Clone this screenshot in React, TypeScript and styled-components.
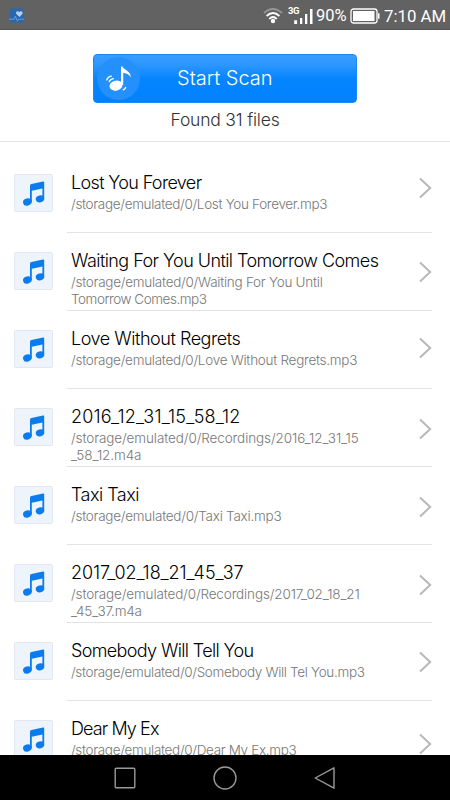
import React from "react";
import styled, { createGlobalStyle } from "styled-components";

const GlobalStyle = createGlobalStyle`
  * { box-sizing: border-box; }
  html, body { margin: 0; padding: 0; background: #fff; overflow: hidden; }
  svg { display: block; flex: none; }
`;

const Screen = styled.div`
  width: 450px;
  height: 800px;
  display: flex;
  flex-direction: column;
  overflow: hidden;
  background: #fff;
  font-family: Inter, "Liberation Sans", sans-serif;
  font-weight: 300;
`;

const StatusBar = styled.header`
  flex: none;
  height: 30px;
  padding: 1px 4px 0 9px;
  display: flex;
  align-items: center;
  background: #626262;
  border-bottom: 1px solid #555;
  color: #fff;
  font-family: Roboto, sans-serif;
  font-weight: 400;
  white-space: nowrap;
`;

const StatusIcons = styled.div`
  margin-left: auto;
  display: flex;
  align-items: center;
  padding-top: 2px;
`;

const StatusText = styled.span<{ $width: number; $size: number; $gap: number }>`
  width: ${(p) => p.$width}px;
  margin-left: ${(p) => p.$gap}px;
  font-size: ${(p) => p.$size}px;
  line-height: 22px;
`;

const SignalGroup = styled.div`
  display: flex;
  align-items: center;
  gap: 5px;
`;

const ScanPanel = styled.section`
  flex: none;
  height: 112px;
  padding-top: 24px;
  display: flex;
  flex-direction: column;
  align-items: center;
  border-bottom: 1px solid #e6e6e6;
`;

const ScanButton = styled.button`
  width: 264px;
  height: 49px;
  margin: 0;
  padding: 0 0 0 3px;
  display: flex;
  align-items: center;
  border: 1px solid #1d88f5;
  border-radius: 4px;
  background: linear-gradient(#3a9dff 0, #2d97ff 20%, #0584ff 52%, #0082ff 100%);
  color: #fff;
  font: inherit;
`;

const ScanLabel = styled.span`
  margin-left: 37px;
  padding-bottom: 1px;
  font-size: 20px;
  white-space: nowrap;
`;

const FoundLabel = styled.p`
  margin: 5px 0 0;
  font-size: 17.5px;
  line-height: 24px;
  letter-spacing: -0.2px;
  color: #333;
`;

const FileList = styled.ul`
  flex: 1;
  min-height: 0;
  margin: 0;
  padding: 13px 18px 0 14px;
  overflow: hidden;
  list-style: none;
`;

const FileRow = styled.li`
  height: 78px;
  display: flex;
`;

const Thumb = styled.div`
  flex: none;
  width: 39px;
  height: 38px;
  margin-top: 19px;
  display: flex;
  align-items: center;
  justify-content: center;
  background: #edf4fc;
  border: 1px solid #e3e8ee;
  border-radius: 2px;
`;

const RowBody = styled.div`
  flex: 1;
  margin-left: 14px;
  padding: 16px 0 0 4px;
  display: flex;
  border-bottom: 1px solid #e2e2e2;
`;

const FileText = styled.div`
  flex: 1;
  white-space: nowrap;
`;

const FileName = styled.div<{ $spacing: number }>`
  font-size: 18px;
  line-height: 23px;
  letter-spacing: ${(p) => p.$spacing}px;
  color: #000;
`;

const FilePath = styled.div`
  margin-top: 2px;
  font-size: 13.5px;
  line-height: 17px;
  color: #777;
`;

const PathLine = styled.div<{ $spacing: number }>`
  letter-spacing: ${(p) => p.$spacing}px;
`;

const ChevronSlot = styled.div<{ $top: number }>`
  flex: none;
  width: 14px;
  padding-top: ${(p) => p.$top}px;
`;

const NavBar = styled.nav`
  flex: none;
  height: 45px;
  display: flex;
  align-items: center;
  justify-content: center;
  gap: 76px;
  background: #000;
`;

const HealthIcon = () => (
  <svg width="17" height="17" viewBox="0 0 17 17">
    <rect x="1" y="1.5" width="14" height="14" rx="3" fill="#2868ae" />
    <path d="M10.5 10 7.4 7C5.9 5.2 8.3 3 10.3 5c1.8-2 4.5.1 3 2z" fill="#b9cfe8" />
    <path d="M0 12.2h5l1.4-3 2 5 1.3-2H15" fill="none" stroke="#6fa3d8" strokeWidth="0.9" />
  </svg>
);

const WifiIcon = () => (
  <svg width="20" height="16" viewBox="0 0 20 16" fill="none">
    <path d="M1 5Q10-3 19 5" stroke="#969696" strokeWidth="1.7" />
    <path d="M3.6 8Q10 2 16.4 8" stroke="#fff" strokeWidth="1.8" />
    <path d="M6.2 11Q10 7 13.8 11" stroke="#fff" strokeWidth="1.8" />
    <circle cx="10" cy="13" r="2.2" fill="#fff" />
  </svg>
);

const SignalIcon = () => (
  <svg width="26" height="20" viewBox="0 0 26 20">
    <text x="0" y="7.5" fill="#fff" fontSize="9.5" fontWeight="700" fontFamily="Roboto" textLength="11.5">3G</text>
    <path d="M6.2 14.3h2.9V18H6.2zM12 12h2.3v6H12zM17 8h2.3v10H17zM22 3h2.5v15H22z" fill="#fff" />
  </svg>
);

const BatteryIcon = () => (
  <svg width="30" height="16" viewBox="0 0 30 16">
    <rect x="1" y="1" width="26" height="14" rx="2.5" fill="none" stroke="#fff" strokeWidth="1.3" />
    <rect x="3" y="3" width="21.5" height="10" fill="#fff" />
    <path d="M28 5.3h1.5v5.4H28z" fill="#fff" />
  </svg>
);

const ScanIcon = () => (
  <svg width="43" height="43" viewBox="0 0 43 43">
    <circle cx="21.5" cy="21.5" r="21.5" fill="#2490fb" />
    <ellipse cx="19" cy="28.6" rx="6.6" ry="5" transform="rotate(-13 19 28.6)" fill="#fff" />
    <path d="M24 28V9.5h1.6c.6 3.4 7.8 3.7 8.3 10.7-2.2-3-4.8-3.9-7.7-4.2V28z" fill="#fff" />
    <path d="M12.3 24.6q.7-2.3 4.1-3M9.8 22.9q.8-3.2 4.5-3.8M26.3 32.7q1.9-.5 2.3-2.3" fill="none" stroke="#fff" strokeWidth="1.4" strokeLinecap="round" />
  </svg>
);

const NoteIcon = () => (
  <svg width="37" height="37" viewBox="0 0 37 37" fill="#0a7cf0">
    <path d="M15 11c.1-1.2.6-1.7 1.5-1.9L28 6.5c.8-.2 1.2.1 1.2.9v16h-1.8v-10l-10.6 2.4v11.4H15z" />
    <ellipse cx="12.4" cy="27" rx="4.4" ry="3.5" transform="rotate(-15 12.4 27)" />
    <ellipse cx="25" cy="23.9" rx="4.3" ry="3.4" transform="rotate(-15 25 23.9)" />
  </svg>
);

const Chevron = () => (
  <svg width="14" height="22" viewBox="0 0 14 22">
    <path d="m2 1.5 10.2 9.5L2 20.5" fill="none" stroke="#b8b8b8" strokeWidth="2" />
  </svg>
);

interface AudioFile {
  name: string;
  spacing: number;
  path: { text: string; spacing: number }[];
  chevronTop: number;
}

const files: AudioFile[] = [
  {
    name: "Lost You Forever",
    spacing: -0.65,
    path: [{ text: "/storage/emulated/0/Lost You Forever.mp3", spacing: -0.32 }],
    chevronTop: 5.5,
  },
  {
    name: "Waiting For You Until Tomorrow Comes",
    spacing: -0.56,
    path: [
      { text: "/storage/emulated/0/Waiting For You Until", spacing: -0.26 },
      { text: "Tomorrow Comes.mp3", spacing: -0.46 },
    ],
    chevronTop: 12,
  },
  {
    name: "Love Without Regrets",
    spacing: -0.46,
    path: [{ text: "/storage/emulated/0/Love Without Regrets.mp3", spacing: -0.27 }],
    chevronTop: 10,
  },
  {
    name: "2016_12_31_15_58_12",
    spacing: 0.2,
    path: [
      { text: "/storage/emulated/0/Recordings/2016_12_31_15", spacing: -0.1 },
      { text: "_58_12.m4a", spacing: -0.1 },
    ],
    chevronTop: 13,
  },
  {
    name: "Taxi Taxi",
    spacing: -0.52,
    path: [{ text: "/storage/emulated/0/Taxi Taxi.mp3", spacing: -0.25 }],
    chevronTop: 13,
  },
  {
    name: "2017_02_18_21_45_37",
    spacing: -0.05,
    path: [
      { text: "/storage/emulated/0/Recordings/2017_02_18_21", spacing: -0.14 },
      { text: "_45_37.m4a", spacing: -0.2 },
    ],
    chevronTop: 12.5,
  },
  {
    name: "Somebody Will Tell You",
    spacing: -0.64,
    path: [{ text: "/storage/emulated/0/Somebody Will Tel You.mp3", spacing: -0.33 }],
    chevronTop: 12,
  },
  {
    name: "Dear My Ex",
    spacing: -0.9,
    path: [{ text: "/storage/emulated/0/Dear My Ex.mp3", spacing: -0.33 }],
    chevronTop: 16,
  },
];

export default function App() {
  return (
    <Screen>
      <GlobalStyle />
      <StatusBar>
        <HealthIcon />
        <StatusIcons>
          <SignalGroup>
            <WifiIcon />
            <SignalIcon />
          </SignalGroup>
          <StatusText $width={34} $size={16.5} $gap={2}>90%</StatusText>
          <BatteryIcon />
          <StatusText $width={62} $size={16.8} $gap={4}>7:10 AM</StatusText>
        </StatusIcons>
      </StatusBar>
      <ScanPanel>
        <ScanButton>
          <ScanIcon />
          <ScanLabel>Start Scan</ScanLabel>
        </ScanButton>
        <FoundLabel>Found 31 files</FoundLabel>
      </ScanPanel>
      <FileList>
        {files.map((file) => (
          <FileRow key={file.name}>
            <Thumb>
              <NoteIcon />
            </Thumb>
            <RowBody>
              <FileText>
                <FileName $spacing={file.spacing}>{file.name}</FileName>
                <FilePath>
                  {file.path.map((line) => (
                    <PathLine key={line.text} $spacing={line.spacing}>
                      {line.text}
                    </PathLine>
                  ))}
                </FilePath>
              </FileText>
              <ChevronSlot $top={file.chevronTop}>
                <Chevron />
              </ChevronSlot>
            </RowBody>
          </FileRow>
        ))}
      </FileList>
      <NavBar>
        <svg width="24" height="24" viewBox="0 0 24 24">
          <rect x="2.2" y="2.2" width="19.6" height="19.6" rx="1" fill="none" stroke="#999" strokeWidth="1.4" />
        </svg>
        <svg width="24" height="24" viewBox="0 0 24 24">
          <circle cx="12" cy="12" r="11" fill="none" stroke="#999" strokeWidth="1.4" />
        </svg>
        <svg width="24" height="24" viewBox="0 0 24 24">
          <path d="M21 1.8v20.4L2.2 12z" fill="none" stroke="#999" strokeWidth="1.4" strokeLinejoin="round" />
        </svg>
      </NavBar>
    </Screen>
  );
}
